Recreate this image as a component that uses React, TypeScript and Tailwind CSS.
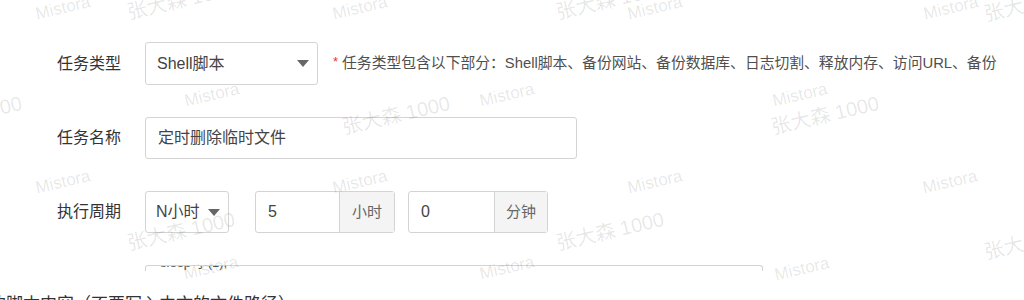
import React from "react";

const FONT = "font-['Liberation_Sans','Noto_Sans_CJK_SC',sans-serif]";

const marks: { cls: string; text: string }[] = [
  { cls: "left-[63px] top-[8px] text-[17px]", text: "Mistora" },
  { cls: "left-[360px] top-[8px] text-[17px]", text: "Mistora" },
  { cls: "left-[655px] top-[8px] text-[17px]", text: "Mistora" },
  { cls: "left-[951px] top-[8px] text-[17px]", text: "Mistora" },
  { cls: "left-[212px] top-[95px] text-[17px]", text: "Mistora" },
  { cls: "left-[507px] top-[95px] text-[17px]", text: "Mistora" },
  { cls: "left-[800px] top-[95px] text-[17px]", text: "Mistora" },
  { cls: "left-[63px] top-[182px] text-[17px]", text: "Mistora" },
  { cls: "left-[360px] top-[182px] text-[17px]", text: "Mistora" },
  { cls: "left-[655px] top-[182px] text-[17px]", text: "Mistora" },
  { cls: "left-[950px] top-[182px] text-[17px]", text: "Mistora" },
  { cls: "left-[211px] top-[268px] text-[17px]", text: "Mistora" },
  { cls: "left-[507px] top-[268px] text-[17px]", text: "Mistora" },
  { cls: "left-[802px] top-[269px] text-[17px]", text: "Mistora" },
  { cls: "left-[181px] top-[0px] text-[20px]", text: "张大森 1000" },
  { cls: "left-[610px] top-[0px] text-[20px]", text: "张大森 1000" },
  { cls: "left-[1038px] top-[2px] text-[20px]", text: "张大森 1000" },
  { cls: "left-[-32px] top-[115px] text-[20px]", text: "张大森 1000" },
  { cls: "left-[396px] top-[115px] text-[20px]", text: "张大森 1000" },
  { cls: "left-[825px] top-[115px] text-[20px]", text: "张大森 1000" },
  { cls: "left-[181px] top-[231px] text-[20px]", text: "张大森 1000" },
  { cls: "left-[610px] top-[231px] text-[20px]", text: "张大森 1000" },
  { cls: "left-[1038px] top-[240px] text-[20px]", text: "张大森 1000" },
];

function Caret() {
  return (
    <svg width="12" height="7" viewBox="0 0 12 7">
      <path d="M0 0 L12 0 L6 7 Z" fill="#666" />
    </svg>
  );
}

export default function App() {
  return (
    <div className={`relative w-[1024px] h-[300px] overflow-hidden bg-white ${FONT}`}>
      <div className="pt-[42px] pl-[57px]">
        {/* Row 1 */}
        <div className="flex items-center h-[43px]">
          <div className="w-[88px] text-[16px] text-[#333]">任务类型</div>
          <div className="w-[173px] h-[43px] border border-[#d4d4d4] rounded-[3px] flex items-center justify-between pl-[11px] pr-[8px] text-[16px] text-[#444]">
            <span>Shell脚本</span>
            <Caret />
          </div>
          <div className="ml-[15px] whitespace-nowrap text-[14.8px] text-[#4f4f4f] flex items-center">
            <span className="text-[#e53935] text-[13px] mr-[4px] relative top-[-2px]">*</span>
            <span>任务类型包含以下部分：Shell脚本、备份网站、备份数据库、日志切割、释放内存、访问URL、备份</span>
          </div>
        </div>

        {/* Row 2 */}
        <div className="flex items-center h-[42px] mt-[32px]">
          <div className="w-[88px] text-[16px] text-[#333]">任务名称</div>
          <div className="w-[432px] h-[42px] border border-[#d4d4d4] rounded-[3px] flex items-center pl-[12px] text-[16px] text-[#444]">
            定时删除临时文件
          </div>
        </div>

        {/* Row 3 */}
        <div className="flex items-center h-[42px] mt-[32px]">
          <div className="w-[88px] text-[16px] text-[#333]">执行周期</div>
          <div className="w-[84px] h-[42px] border border-[#d4d4d4] rounded-[3px] flex items-center justify-between pl-[10px] pr-[8px] text-[16px] text-[#444]">
            <span>N小时</span>
            <Caret />
          </div>
          <div className="ml-[26px] w-[140px] h-[42px] flex border border-[#d4d4d4] rounded-[3px] text-[16px]">
            <div className="flex-1 flex items-center pl-[12px] text-[#444]">5</div>
            <div className="w-[55px] flex items-center justify-center border-l border-[#d4d4d4] bg-[#f4f4f4] text-[#666] text-[15px]">
              小时
            </div>
          </div>
          <div className="ml-[13px] w-[140px] h-[42px] flex border border-[#d4d4d4] rounded-[3px] text-[16px]">
            <div className="flex-1 flex items-center pl-[12px] text-[#444]">0</div>
            <div className="w-[53px] flex items-center justify-center border-l border-[#d4d4d4] bg-[#f4f4f4] text-[#666] text-[15px]">
              分钟
            </div>
          </div>
        </div>

        {/* Row 4 (cut-off textarea) */}
        <div className="mt-[32px] ml-[88px] w-[618px] h-[6px] border-t border-l border-r border-[#d4d4d4] rounded-t-[3px] overflow-hidden">
          <div className="mt-[-11px] pl-[14px] text-[13px] leading-[16px] text-[#555] whitespace-nowrap">
            sleep 字(1);
          </div>
        </div>

        {/* Bottom cut text */}
        <div className="mt-[22px] ml-[-68px] text-[17px] leading-[24px] text-[#333] whitespace-nowrap">
          的脚本内容（不要写入中文的文件路径）
        </div>
      </div>

      {/* Watermark overlay */}
      <div className="pointer-events-none absolute inset-0">
        {marks.map((m, i) => (
          <span
            key={i}
            className={`absolute whitespace-nowrap text-black/10 -translate-x-1/2 -translate-y-1/2 rotate-[-13deg] ${m.cls}`}
          >
            {m.text}
          </span>
        ))}
      </div>
    </div>
  );
}
